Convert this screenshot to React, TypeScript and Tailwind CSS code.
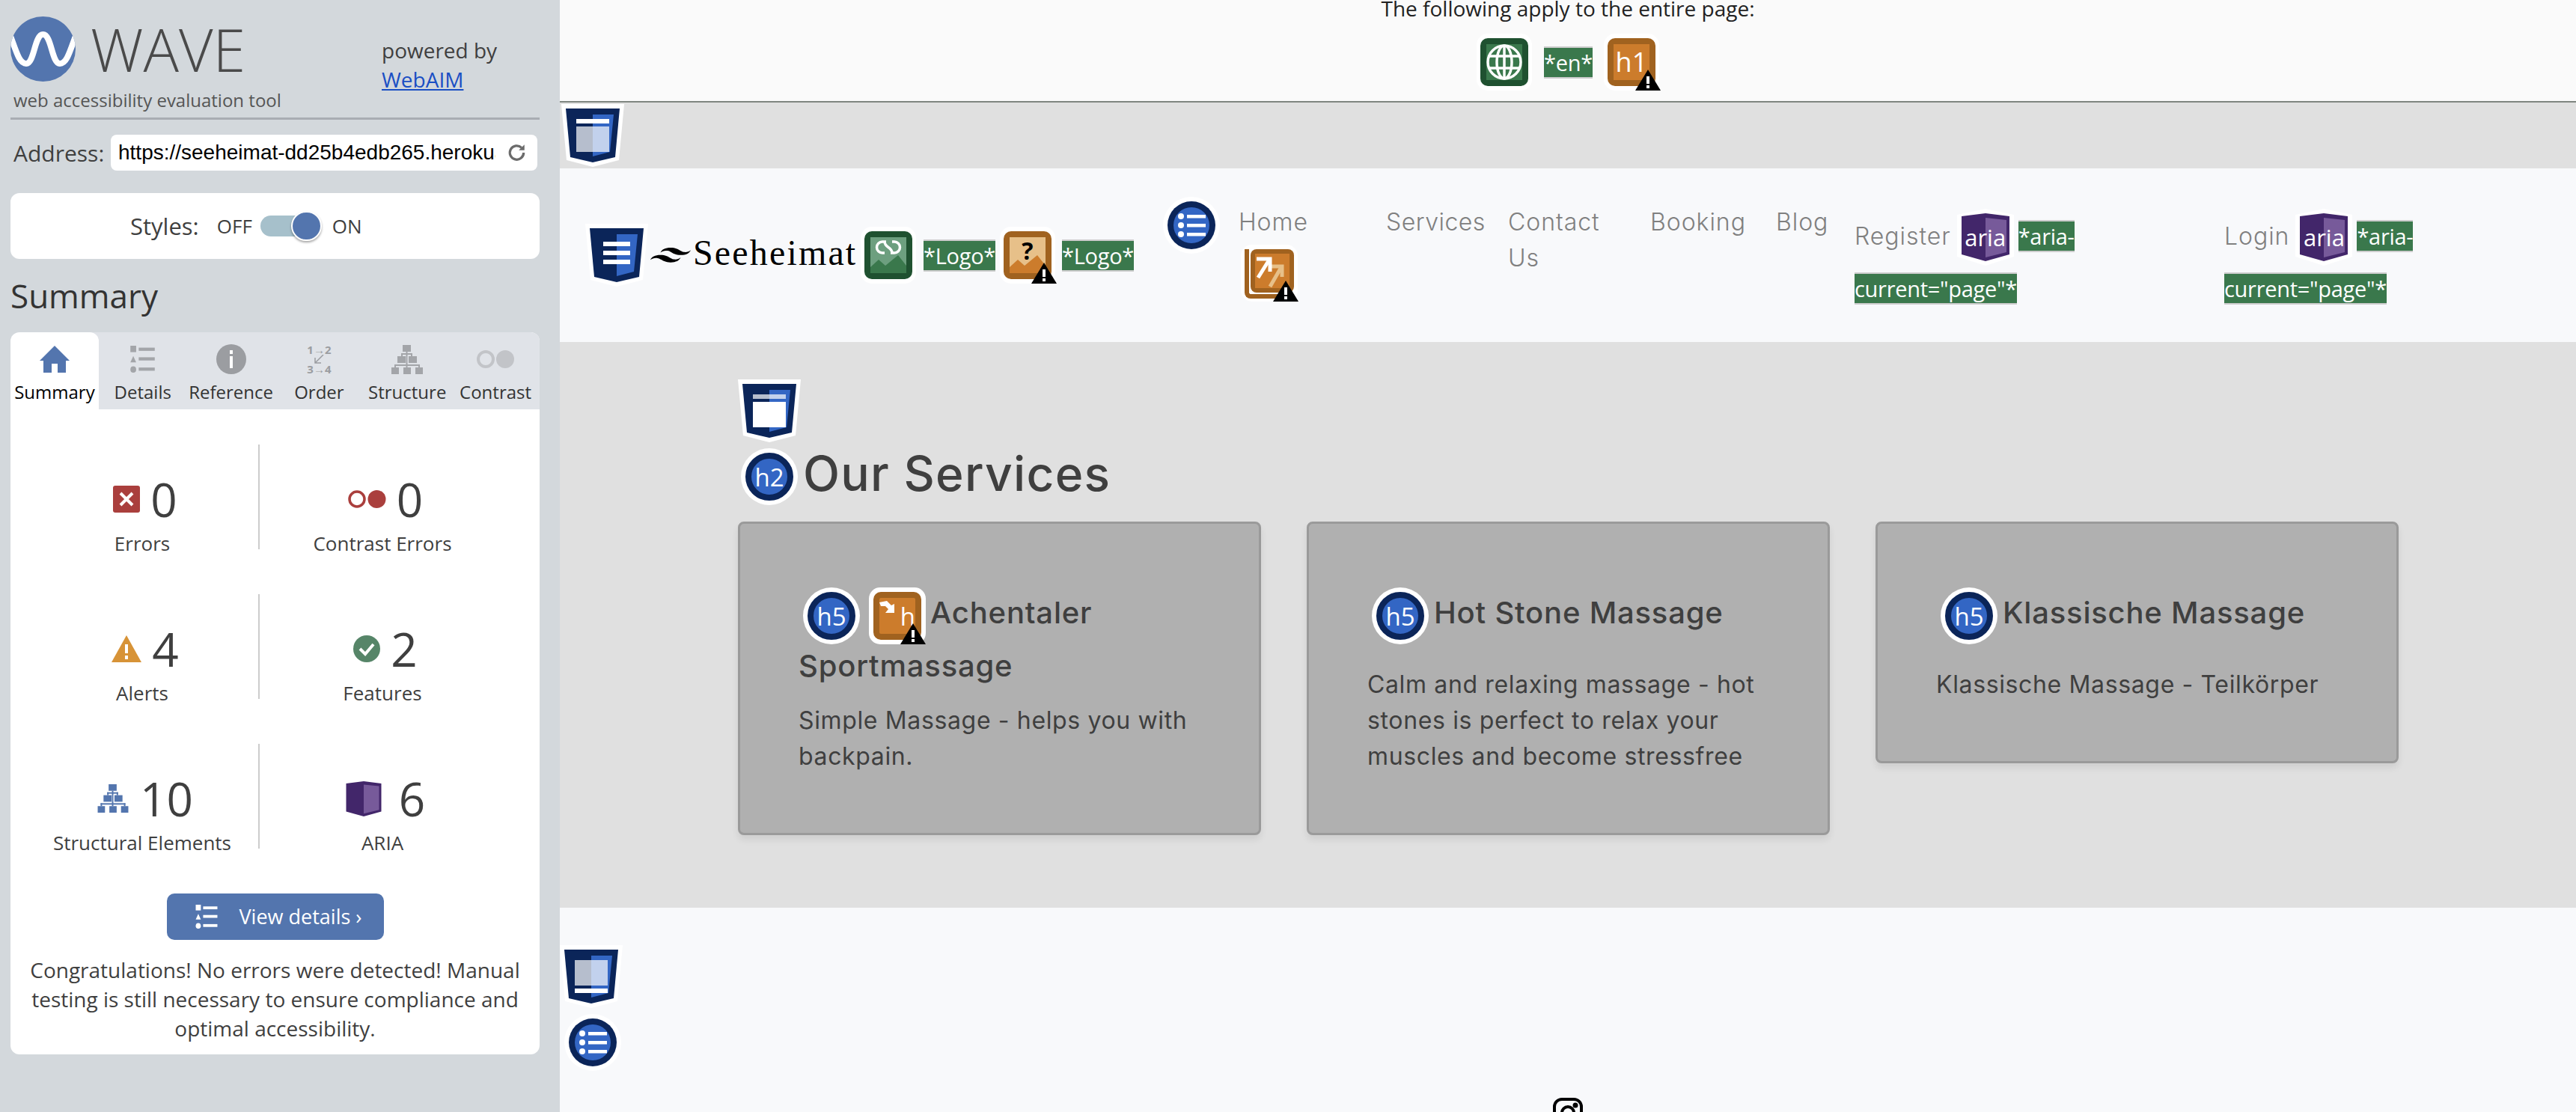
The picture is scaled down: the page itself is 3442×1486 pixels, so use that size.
import type { ReactNode } from "react";

const Warn = ({ pos = "left-[37px] top-[42px]" }: { pos?: string }) => (
  <svg viewBox="0 0 34 28" className={`absolute h-[28px] w-[34px] ${pos}`}>
    <polygon points="17,0 34,28 0,28" fill="#000" />
    <rect x="15" y="9" width="4" height="10" fill="#fff" />
    <rect x="15" y="21" width="4" height="4" fill="#fff" />
  </svg>
);

const GreenBox = ({ children }: { children: ReactNode }) => (
  <div className="shrink-0 rounded-[15px] bg-white px-[5px] py-[6px]">
    <div className="relative h-[64px] w-[64px] overflow-hidden rounded-[10px] bg-[#1f5130]">{children}</div>
  </div>
);

const OrangeBox = ({ children }: { children: ReactNode }) => (
  <div className="relative shrink-0 rounded-[15px] bg-white px-[5px] py-[6px]">
    <div className="relative h-[64px] w-[64px] overflow-hidden rounded-[10px] bg-[#a0621f]">{children}</div>
    <Warn pos="left-[42px] top-[48px]" />
  </div>
);

const Circle = ({ children }: { children: ReactNode }) => (
  <div className="shrink-0 rounded-full bg-white px-[6px] py-[6px]">
    <div className="flex h-[64px] w-[64px] items-center justify-center rounded-full border-[8px] border-[#0b2559] bg-[#3366c4]">
      {children}
    </div>
  </div>
);

const HeadingBadge = ({ level }: { level: string }) => (
  <Circle>
    <span className="text-[33px] leading-none text-white">{level}</span>
  </Circle>
);

const ListBadge = () => (
  <div className="shrink-0 rounded-full bg-white p-[6px]">
    <svg viewBox="0 0 64 64" className="h-[64px] w-[64px]">
      <circle cx="32" cy="32" r="32" fill="#0b2559" />
      <circle cx="32" cy="32" r="24" fill="#3366c4" />
      <circle cx="18" cy="20" r="4" fill="#fff" />
      <circle cx="18" cy="32" r="4" fill="#fff" />
      <circle cx="18" cy="44" r="4" fill="#fff" />
      <rect x="26" y="18" width="25" height="4.5" fill="#fff" />
      <rect x="26" y="30" width="25" height="4.5" fill="#fff" />
      <rect x="26" y="42" width="25" height="4.5" fill="#fff" />
    </svg>
  </div>
);

const Shield = ({ children }: { children: ReactNode }) => (
  <svg viewBox="0 0 84 84" className="block h-[84px] w-[84px] shrink-0">
    <polygon points="0,0 84,0 77,75 42,84 7,75" fill="#fff" />
    <polygon points="6,6 78,6 72,71 42,78 12,71" fill="#0b2559" />
    <polygon points="42,14 70,14 65,64 42,70" fill="#3366c4" />
    {children}
  </svg>
);

const AriaShape = ({ className }: { className: string }) => (
  <svg viewBox="0 0 64 64" className={className}>
    <polygon points="0,4 32,0 64,4 64,55 32,64 0,55" fill="#42266a" />
    <polygon points="32,6 60,9 60,52 32,59" fill="#775a9a" />
  </svg>
);

const AriaBadge = () => (
  <div className="relative shrink-0 px-[6px] py-[6px]">
    <svg viewBox="0 0 76 76" className="absolute left-0 top-0 h-[76px] w-[76px]">
      <polygon points="0,8 38,0 76,8 76,64 38,76 0,64" fill="#fff" />
    </svg>
    <div className="relative flex h-[64px] w-[64px] items-center justify-center">
      <AriaShape className="absolute inset-0" />
      <span className="relative font-['Open_Sans',sans-serif] text-[31px] font-normal leading-none tracking-normal text-white">aria</span>
    </div>
  </div>
);

const Tag = ({ children }: { children: ReactNode }) => (
  <span className="block shrink-0 whitespace-nowrap border-y-2 border-[#cccccc] bg-[#3a784c] font-['Open_Sans',sans-serif] text-[29px] font-normal leading-[39px] tracking-[-0.01em] text-white">
    {children}
  </span>
);

const Mountains = ({ fill }: { fill: string }) => (
  <svg viewBox="0 0 64 64" className="absolute inset-0 h-[64px] w-[64px]">
    <polygon points="8,48 19,38 28,46 45,32 56,46 56,56 8,56" fill={fill} />
  </svg>
);

const ListGlyph = ({ className, fill }: { className: string; fill: string }) => (
  <svg viewBox="0 0 38 42" className={className} fill={fill}>
    <rect x="0" y="0" width="9" height="10" />
    <polygon points="4.5,16 9,26 0,26" />
    <ellipse cx="4.5" cy="37" rx="4.5" ry="5" />
    <rect x="13" y="3" width="25" height="5" />
    <rect x="13" y="18" width="25" height="5" />
    <rect x="13" y="34" width="25" height="5" />
  </svg>
);

const tree = (
  <>
    <rect x="15" y="0" width="11" height="9" />
    <rect x="8" y="15" width="11" height="9" />
    <rect x="23" y="15" width="11" height="9" />
    <rect x="0" y="30" width="10" height="9" />
    <rect x="16" y="30" width="10" height="9" />
    <rect x="32" y="30" width="10" height="9" />
    <rect x="19.5" y="9" width="2" height="21" />
    <rect x="13" y="11" width="15" height="2" />
    <rect x="13" y="11" width="2" height="4" />
    <rect x="26" y="11" width="2" height="4" />
    <rect x="4" y="26" width="34" height="2" />
    <rect x="4" y="26" width="2" height="4" />
    <rect x="36" y="26" width="2" height="4" />
  </>
);

const tabs: { label: string; icon: ReactNode }[] = [
  {
    label: "Summary",
    icon: (
      <svg viewBox="0 0 40 36" className="h-[36px] w-[40px]" fill="#5375ae">
        <path d="M20 0 L40 20 L35 20 L35 36 L24 36 L24 24 L16 24 L16 36 L5 36 L5 20 L0 20 Z" />
      </svg>
    ),
  },
  { label: "Details", icon: <ListGlyph className="h-[36px] w-[37px]" fill="#a3a5a9" /> },
  {
    label: "Reference",
    icon: (
      <svg viewBox="0 0 40 40" className="h-[40px] w-[40px]">
        <circle cx="20" cy="20" r="20" fill="#9b9da1" />
        <rect x="18" y="8" width="4" height="5" fill="#fff" />
        <rect x="18" y="16" width="4" height="16" fill="#fff" />
      </svg>
    ),
  },
  {
    label: "Order",
    icon: (
      <div className="flex h-[40px] w-[38px] flex-col items-center font-['Open_Sans',sans-serif] text-[15px] font-bold leading-[14px] text-[#9b9da1]">
        <span className="whitespace-nowrap">1→2</span>
        <svg viewBox="0 0 16 12" className="h-[12px] w-[16px]" fill="none" stroke="#9b9da1" strokeWidth="1.5">
          <path d="M14 0 L3 11 M3 4 V11 H11" />
        </svg>
        <span className="whitespace-nowrap">3→4</span>
      </div>
    ),
  },
  {
    label: "Structure",
    icon: (
      <svg viewBox="0 0 42 39" className="h-[39px] w-[42px]" fill="#a3a5a9">
        {tree}
      </svg>
    ),
  },
  {
    label: "Contrast",
    icon: (
      <svg viewBox="0 0 50 24" className="h-[24px] w-[50px]">
        <circle cx="12" cy="12" r="10" fill="none" stroke="#c2c4c8" strokeWidth="4" />
        <circle cx="38" cy="12" r="12" fill="#c2c4c8" />
      </svg>
    ),
  },
];

const stats: { icon: ReactNode; value: string; label: string; gap: string }[] = [
  {
    value: "0",
    label: "Errors",
    gap: "gap-[14px]",
    icon: (
      <svg viewBox="0 0 36 36" className="h-[36px] w-[36px]">
        <rect width="36" height="36" rx="3" fill="#aa3f3d" />
        <path d="M10 10 L26 26 M26 10 L10 26" stroke="#fff" strokeWidth="4" />
      </svg>
    ),
  },
  {
    value: "0",
    label: "Contrast Errors",
    gap: "gap-[14px]",
    icon: (
      <svg viewBox="0 0 51 24" className="h-[24px] w-[51px]">
        <circle cx="12" cy="12" r="10" fill="none" stroke="#aa3f3d" strokeWidth="3.5" />
        <circle cx="38.5" cy="12" r="12" fill="#aa3f3d" />
      </svg>
    ),
  },
  {
    value: "4",
    label: "Alerts",
    gap: "gap-[14px]",
    icon: (
      <svg viewBox="0 0 40 36" className="h-[36px] w-[40px]">
        <polygon points="20,0 40,36 0,36" fill="#d79337" />
        <rect x="18" y="12" width="4" height="12" fill="#fff" />
        <rect x="18" y="27" width="4" height="5" fill="#fff" />
      </svg>
    ),
  },
  {
    value: "2",
    label: "Features",
    gap: "gap-[14px]",
    icon: (
      <svg viewBox="0 0 36 36" className="h-[36px] w-[36px]">
        <circle cx="18" cy="18" r="18" fill="#568568" />
        <path d="M9 18 L16 25 L27 12" fill="none" stroke="#fff" strokeWidth="4" />
      </svg>
    ),
  },
  {
    value: "10",
    label: "Structural Elements",
    gap: "gap-[15px]",
    icon: (
      <svg viewBox="0 0 42 39" className="h-[38px] w-[42px]" fill="#5375ae">
        {tree}
      </svg>
    ),
  },
  {
    value: "6",
    label: "ARIA",
    gap: "gap-[23px]",
    icon: <AriaShape className="h-[47px] w-[48px]" />,
  },
];

const Sidebar = () => (
  <aside className="flex h-[1486px] w-[748px] shrink-0 flex-col bg-[#d3d8dc] pl-[14px] pr-[27px] pt-[22px] font-['Open_Sans',sans-serif] text-[#3f3f3f]">
    <div className="flex h-[138px] border-b-[3px] border-[#a9adb3]">
      <div className="w-[496px]">
        <div className="flex h-[87px] items-center">
          <svg viewBox="0 0 87 87" className="h-[87px] w-[87px] shrink-0">
            <defs>
              <clipPath id="wave-logo">
                <circle cx="43.5" cy="43.5" r="43.5" />
              </clipPath>
            </defs>
            <circle cx="43.5" cy="43.5" r="43.5" fill="#5375ae" />
            <path
              clipPath="url(#wave-logo)"
              d="M0 26 C8 48 12 63 21 63 C32 63 32 24 43.5 24 C55 24 55 63 66 63 C75 63 79 48 87 26"
              fill="none"
              stroke="#fff"
              strokeWidth="8"
            />
          </svg>
          <span className="ml-[20px] text-[79px] font-light leading-[87px] text-[#4a4a4a]">WAVE</span>
        </div>
        <div className="ml-[4px] mt-[8px] text-[24px] leading-[34px] text-[#555555]">web accessibility evaluation tool</div>
      </div>
      <div className="pt-[26px] text-[28px] leading-[39px]">
        <div>powered by</div>
        <a className="text-[#1a4fc4] underline">WebAIM</a>
      </div>
    </div>

    <div className="mt-[20px] flex items-center">
      <span className="ml-[4px] w-[130px] text-[30px]">Address:</span>
      <div className="flex h-[48px] w-[570px] items-center rounded-[8px] bg-white pl-[10px]">
        <span className="w-[504px] overflow-hidden whitespace-nowrap font-['Liberation_Sans',sans-serif] text-[28px] text-black">
          https://seeheimat-dd25b4edb265.herokuapp.com/
        </span>
        <svg viewBox="0 0 24 24" className="ml-[16px] h-[26px] w-[26px]" fill="none" stroke="#6b6b6b" strokeWidth="3">
          <path d="M20 12a8.5 8.5 0 1 1-2.6-6.1" />
          <path d="M21 2v7h-7" fill="#6b6b6b" stroke="none" />
        </svg>
      </div>
    </div>

    <div className="mt-[30px] flex h-[88px] items-center rounded-[12px] bg-white pl-[160px]">
      <span className="text-[31px]">Styles:</span>
      <span className="ml-[24px] text-[26px]">OFF</span>
      <div className="relative ml-[11px] h-[28px] w-[64px] rounded-full bg-[#a6c0cb]">
        <div className="absolute left-[41px] top-[-6px] h-[40px] w-[41px] rounded-full border-2 border-white bg-[#5375ae] shadow-[0_2px_3px_rgba(0,0,0,0.35)]" />
      </div>
      <span className="ml-[32px] text-[26px]">ON</span>
    </div>

    <h2 className="mb-[19px] mt-[19px] text-[44px] font-normal leading-[60px] text-[#333333]">Summary</h2>

    <div className="flex flex-col overflow-hidden rounded-[12px] bg-white">
      <div className="flex h-[103px] bg-[#e0e3e8]">
        {tabs.map((t, i) => (
          <div
            key={t.label}
            className={
              i === 0
                ? "flex w-[118px] flex-col items-center rounded-t-[12px] bg-white pt-[16px] text-[24px] text-black"
                : "flex w-[118px] flex-col items-center pt-[16px] text-[24px] text-[#333333]"
            }
          >
            <div className="flex h-[40px] items-center">{t.icon}</div>
            <span className="mt-[8px] leading-[32px]">{t.label}</span>
          </div>
        ))}
      </div>

      <div className="ml-[21px] mt-[47px] grid grid-cols-[310px_330px] gap-y-[60px]">
        {stats.map((s, i) => (
          <div key={s.label} className={i % 2 === 1 ? "h-[140px] border-l-2 border-[#cccccc] pt-[28px] text-center" : "h-[140px] pt-[28px] text-center"}>
            <div className={`flex h-[90px] items-center justify-center pl-[8px] ${s.gap}`}>
              {s.icon}
              <span className="text-[62px] font-normal leading-none text-[#3f3f3f]">{s.value}</span>
            </div>
            <div className="-mt-[4px] text-[26px] leading-[36px]">{s.label}</div>
          </div>
        ))}
      </div>

      <div className="mt-[60px] flex h-[62px] w-[290px] items-center self-center rounded-[10px] bg-[#5375ae] pl-[34px] text-[27px] text-white">
        <ListGlyph className="h-[32px] w-[38px]" fill="#fff" />
        <span className="ml-[25px]">View details ›</span>
      </div>

      <p className="mb-[15px] mt-[21px] px-[20px] text-center text-[28px] leading-[39px]">
        Congratulations! No errors were detected! Manual testing is still necessary to ensure compliance and optimal accessibility.
      </p>
    </div>
  </aside>
);

const Nav = () => (
  <nav className="flex h-[232px] items-start bg-[#f8f9fb] pl-[34px] font-['Open_Sans',sans-serif]">
    <div className="mt-[74px] flex items-center">
      <Shield>
        <rect x="24" y="24" width="36" height="6" fill="#fff" />
        <rect x="24" y="36" width="36" height="6" fill="#fff" />
        <rect x="24" y="48" width="36" height="6" fill="#fff" />
      </Shield>
      <svg viewBox="0 0 54 33" preserveAspectRatio="none" className="ml-[3px] h-[20px] w-[54px]" fill="#000">
        <path d="M27 0c-7.2 0-11.7 3.6-13.5 10.8 2.7-3.6 5.85-4.95 9.45-4.05 2.054.513 3.522 2.004 5.147 3.653C30.744 13.09 33.808 16.2 40.5 16.2c7.2 0 11.7-3.6 13.5-10.8-2.7 3.6-5.85 4.95-9.45 4.05-2.054-.513-3.522-2.004-5.147-3.653C36.756 3.11 33.692 0 27 0zM13.5 16.2C6.3 16.2 1.8 19.8 0 27c2.7-3.6 5.85-4.95 9.45-4.05 2.054.514 3.522 2.004 5.147 3.653C17.244 29.29 20.308 32.4 27 32.4c7.2 0 11.7-3.6 13.5-10.8-2.7 3.6-5.85 4.95-9.45 4.05-2.054-.513-3.522-2.004-5.147-3.653C23.256 19.31 20.192 16.2 13.5 16.2z" />
      </svg>
      <span className="mb-[6px] ml-[3px] w-[224px] whitespace-nowrap font-['Liberation_Serif',serif] text-[48px] leading-none tracking-[0.045em] text-black">Seeheimat</span>
      <GreenBox>
        <div className="absolute inset-[8px] bg-[#6d9f7f]" />
        <Mountains fill="#3a784c" />
        <svg viewBox="0 0 64 64" className="absolute inset-0 h-[64px] w-[64px]" fill="none" stroke="#fff" strokeWidth="3.5">
          <path d="M29 14 H24 A7.5 7.5 0 0 0 24 29 H27" />
          <path d="M35 29 H40 A7.5 7.5 0 0 0 40 14 H37" />
          <path d="M27 14 C27 22 37 21 37 29" />
        </svg>
      </GreenBox>
      <div className="ml-[10px]">
        <Tag>*Logo*</Tag>
      </div>
      <div className="ml-[6px]">
        <OrangeBox>
          <div className="absolute inset-[8px] bg-[#e7c089]" />
          <Mountains fill="#cc7c2c" />
          <span className="absolute left-0 right-0 top-[10px] text-center text-[32px] font-bold leading-[32px] text-black">?</span>
        </OrangeBox>
      </div>
      <div className="ml-[9px]">
        <Tag>*Logo*</Tag>
      </div>
    </div>

    <div className="ml-[39px] mt-[38px]">
      <ListBadge />
    </div>

    <ul className="ml-[25px] mt-[48px] flex font-['Inter',sans-serif] text-[32px] font-light leading-[48px] tracking-[0.03em] text-[#808080]">
      <li className="w-[197px]">
        Home
        <div className="relative ml-[3px] mt-[6px] h-[76px] w-[76px] rounded-[15px] bg-white">
          <div className="absolute left-[5px] top-[6px] h-[66px] w-[66px] rounded-bl-[8px] border-b-[6px] border-l-[6px] border-[#a0621f]" />
          <div className="absolute left-[13px] top-[6px] h-[58px] w-[58px] rounded-[8px] bg-[#a0621f] p-[6px]">
            <div className="h-[46px] w-[46px] bg-[#cc7c2c]" />
            <svg viewBox="0 0 58 58" className="absolute inset-0 h-[58px] w-[58px]" fill="none">
              <path d="M28 23 L42 23 L42 37" stroke="#e7c089" strokeWidth="5" />
              <path d="M41 24 L26 50" stroke="#e7c089" strokeWidth="5" />
              <path d="M8 13 L26 13 L26 30" stroke="#fff" strokeWidth="5" />
              <path d="M25 14 L10 38" stroke="#fff" strokeWidth="5" />
            </svg>
          </div>
          <Warn pos="left-[43px] top-[48px]" />
        </div>
      </li>
      <li className="w-[163px] tracking-[0.015em]">Services</li>
      <li className="w-[190px] pr-[40px]">Contact Us</li>
      <li className="w-[168px]">Booking</li>
      <li className="w-[105px]">Blog</li>
      {["Register", "Login"].map((item) => (
        <li key={item} className={item === "Register" ? "mt-[6px] w-[494px]" : "mt-[6px] w-[300px]"}>
          <div className="flex h-[76px] items-center">
            <span className="mb-[3px]">{item}</span>
            <div className="ml-[8px]">
              <AriaBadge />
            </div>
            <div className="mb-[4px] ml-[6px]">
              <Tag>*aria-</Tag>
            </div>
          </div>
          <div className="mt-[9px] inline-block">
            <Tag>current="page"*</Tag>
          </div>
        </li>
      ))}
    </ul>
  </nav>
);

const cards = [
  {
    lines: ["Achentaler", "Sportmassage"],
    text: "Simple Massage - helps you with backpain.",
    spacing: "mt-[13px]",
    redirect: true,
  },
  {
    lines: ["Hot Stone Massage"],
    text: "Calm and relaxing massage - hot stones is perfect to relax your muscles and become stressfree",
    spacing: "mt-[30px]",
    redirect: false,
  },
  {
    lines: ["Klassische Massage"],
    text: "Klassische Massage - Teilkörper",
    spacing: "mt-[30px]",
    redirect: false,
  },
];

const Services = () => (
  <section className="h-[756px] bg-[#e0e0e0] pl-[238px] pt-[50px] font-['Inter',sans-serif] text-[#3f3f3f]">
    <Shield>
      <rect x="20" y="20" width="44" height="6" fill="#fff" fillOpacity="0.7" />
      <rect x="20" y="30" width="44" height="34" fill="#fff" />
    </Shield>
    <div className="ml-[4px] mt-[8px] flex h-[76px] items-center">
      <div className="font-['Open_Sans',sans-serif]">
        <HeadingBadge level="h2" />
      </div>
      <h2 className="mb-[8px] ml-[7px] text-[64px] font-medium tracking-[0.02em]">Our Services</h2>
    </div>
    <div className="mt-[22px] flex items-start gap-[61px]">
      {cards.map((c) => (
        <article
          key={c.lines[0]}
          className="w-[699px] rounded-[8px] border-[3px] border-[#9a9a9a] bg-[#b0b0b0] pb-[78px] pl-[78px] pr-[60px] pt-[85px] shadow-[0_6px_10px_rgba(0,0,0,0.08)]"
        >
          <h5 className="text-[40px] font-medium leading-[72px] tracking-[0.02em]">
            <div className="flex h-[76px] items-center">
              <div className="ml-[6px] font-['Open_Sans',sans-serif] tracking-normal">
                <HeadingBadge level="h5" />
              </div>
              {c.redirect && (
                <div className="relative ml-[12px] h-[76px] w-[76px] rounded-[15px] bg-white px-[6px] py-[6px] font-['Open_Sans',sans-serif] tracking-normal">
                  <div className="relative flex h-[64px] w-[64px] items-center justify-end rounded-[10px] border-[8px] border-[#a0621f] bg-[#cc7c2c]">
                    <svg viewBox="0 0 24 24" className="absolute left-0 top-[2px] h-[24px] w-[24px]" fill="#fff">
                      <path d="M0 4 L10 2 L16 8 L20 6 L20 18 L8 18 L12 13 L8 9 L2 9 Z" />
                    </svg>
                    <span className="text-[33px] font-normal leading-none text-white">h</span>
                  </div>
                  <Warn pos="left-[42px] top-[48px]" />
                </div>
              )}
              <span className={c.redirect ? "mb-[8px] ml-[6px]" : "mb-[8px] ml-[7px]"}>{c.lines[0]}</span>
            </div>
            {c.lines[1] && <div className="-mt-[7px]">{c.lines[1]}</div>}
          </h5>
          <p className={`text-[32px] font-normal leading-[48px] tracking-[0.02em] ${c.spacing}`}>{c.text}</p>
        </article>
      ))}
    </div>
  </section>
);

const Footer = () => (
  <footer className="h-[273px] overflow-hidden bg-[#f8f9fb] pt-[50px]">
    <Shield>
      <rect x="20" y="20" width="44" height="34" fill="#fff" fillOpacity="0.7" />
      <rect x="20" y="58" width="44" height="6" fill="#fff" />
    </Shield>
    <div className="ml-[6px] mt-[8px] w-fit">
      <ListBadge />
    </div>
    <div className="mt-[36px] flex justify-center">
      <svg viewBox="0 0 40 40" className="h-[40px] w-[40px]" fill="none" stroke="#000" strokeWidth="4">
        <rect x="2" y="2" width="36" height="36" rx="10" />
        <circle cx="20" cy="20" r="8" />
        <circle cx="30" cy="10" r="1.5" fill="#000" />
      </svg>
    </div>
  </footer>
);

export default function App() {
  return (
    <div className="flex h-[1486px] w-[3442px] overflow-hidden">
      <Sidebar />
      <main className="flex h-[1486px] min-w-0 flex-1 flex-col overflow-hidden">
        <div className="h-[137px] overflow-hidden border-b-2 border-[#7f8680] bg-[#fafafa] text-center font-['Open_Sans',sans-serif] text-[#222222]">
          <div className="-mt-[8px] text-[28px] leading-[39px]">The following apply to the entire page:</div>
          <div className="mt-[14px] flex items-center justify-center">
            <GreenBox>
              <div className="absolute inset-[8px] bg-[#3a784c]" />
              <svg viewBox="0 0 64 64" className="absolute inset-0 h-[64px] w-[64px]" fill="none" stroke="#fff" strokeWidth="3.5">
                <ellipse cx="32" cy="32" rx="22" ry="22" />
                <ellipse cx="32" cy="32" rx="10" ry="22" />
                <path d="M32 10 V54 M12 24 H52 M12 40 H52" />
              </svg>
            </GreenBox>
            <div className="ml-[16px]">
              <Tag>*en*</Tag>
            </div>
            <div className="ml-[15px]">
              <OrangeBox>
                <div className="absolute inset-[8px] flex items-center justify-center bg-[#cc7c2c]">
                  <span className="text-[36px] leading-none text-white">h1</span>
                </div>
              </OrangeBox>
            </div>
          </div>
        </div>
        <div className="h-[88px] shrink-0 bg-[#e0e0e0] pl-[2px] pt-[2px]">
          <Shield>
            <rect x="20" y="20" width="44" height="6" fill="#fff" />
            <rect x="20" y="30" width="44" height="34" fill="#fff" fillOpacity="0.7" />
          </Shield>
        </div>
        <Nav />
        <Services />
        <Footer />
      </main>
    </div>
  );
}
